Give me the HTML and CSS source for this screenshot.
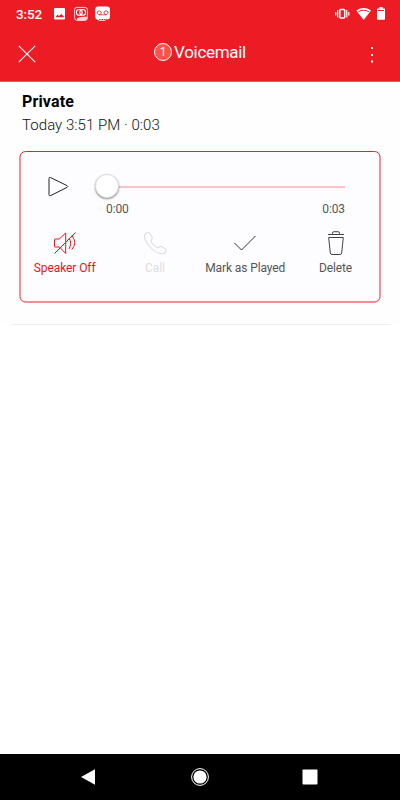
FILE: index.html
```html
<!DOCTYPE html>
<html lang="en">
<head>
<meta charset="utf-8">
<title>Voicemail</title>
<link rel="stylesheet" href="styles.css">
</head>
<body>
<header class="top">
  <div class="status">
    <span class="time">3:52</span>
    <svg class="notices" width="58" height="16" viewBox="0 0 58 16">
      <rect x="1" y="2" width="11" height="11.5" rx="1" fill="#fff"/>
      <path d="M2.500 11.200l2-2.700 1.500 1.600L8.400 8l3 3.200z" fill="#ed1c24"/>
      <rect x="21.600" y="1.400" width="12.800" height="13" rx="2.500" fill="none" stroke="#fff" stroke-opacity=".8" stroke-width="1"/>
      <path d="M24 12.200q3.500-1.700 10-1.400v1.800q-.5 1.600-2 1.600h-8z" fill="#ffd9db"/>
      <circle cx="26.300" cy="6.400" r="2.900" fill="none" stroke="#fff" stroke-width="1.100"/>
      <circle cx="29.700" cy="6.400" r="2.900" fill="none" stroke="#fff" stroke-width="1.100"/>
      <path d="M45 .5h9q3 0 3 3v7q0 3-3 3h-1l-1 1.300h-6l-1-.8q-2.800-.5-2.800-3.500v-7q0-3 2.800-3z" fill="#fff"/>
      <path d="M46.200 4.800a1.900 1.900 0 1 0 .1 0M53 4.800a1.900 1.900 0 1 0 .1 0M46.200 8.800h3.300M49.800 8.800h3" fill="none" stroke="#ed1c24" stroke-width=".9"/>
      <path d="M46 13.500h8" stroke="#ed1c24" stroke-width="1" stroke-dasharray="1.500 1"/>
    </svg>
    <svg class="signals" width="52" height="16" viewBox="0 0 52 16">
      <rect x="5.800" y="2.500" width="4.900" height="8.500" rx="1" fill="none" stroke="#fff" stroke-width="1.500"/>
      <path d="M3.700 3v7.500M12.800 3v7.500M1.700 5v3.500M14.800 5v3.500" stroke="#fff" stroke-width="1.200"/>
      <path d="M22.300 3.400Q29.700-1.200 37 3.400L29.700 13z" fill="#fff"/>
      <path d="M24.500 4.800q5.200-3.200 10.400 0" fill="none" stroke="#ed1c24" stroke-width="1"/>
      <path d="M43.600 1.500h1.700V0h3.400v1.500h1.700q.6 0 .6.600V12q0 .8-.8.800h-6.400q-.8 0-.8-.8V2.100q0-.6.600-.6z" fill="#fff"/>
      <path d="M44 3.500h6" stroke="#ed1c24" stroke-width="1"/>
    </svg>
  </div>
  <div class="bar">
    <svg class="close" width="18" height="18" viewBox="0 0 18 18"><path d="M.8.800l16.400 16.400M17.200.8L.8 17.200" stroke="#fff" stroke-width="1.100"/></svg>
    <h1 class="title"><span class="badge">1</span><span class="name">Voicemail</span></h1>
    <svg class="more" width="4" height="18" viewBox="0 0 4 18"><path d="M1 1h2v2H1zM1 8h2v2H1zM1 14.500h2v2H1z" fill="#fff"/></svg>
  </div>
</header>
<main class="message">
  <h2 class="caller">Private</h2>
  <p class="when">Today 3:51 PM · 0:03</p>
  <section class="player">
    <svg class="frame" width="362" height="153" viewBox="0 0 362 153"><rect x="1" y=".5" width="360" height="150.500" rx="5.500" fill="#fdfdff" stroke="#ee1c24" stroke-width="1"/></svg>
    <div class="track-row">
      <svg class="play" width="22" height="22" viewBox="0 0 22 22"><path d="M2 2.700q0-1.900 1.700-1.100L20 9.600q1.500.9 0 1.800L3.700 19.600q-1.700.7-1.700-1.100z" fill="none" stroke="#222" stroke-width="1"/></svg>
      <div class="slider"><span class="thumb"></span></div>
    </div>
    <div class="times"><span>0:00</span><span>0:03</span></div>
    <div class="actions">
      <div class="action speaker">
        <svg width="24" height="26" viewBox="0 0 24 26"><g fill="none" stroke="#e8141c" stroke-width="1"><path d="M2 9h4.200L12.700 3v20.500L6.500 17H2q-.5 0-.5-.5v-7q0-.5.500-.5zM1.500 23.500L22.500 2.500M16 8q3.300 5 0 11M18.800 5.500q6 7.500 0 14"/></g></svg>
        <span>Speaker Off</span>
      </div>
      <div class="action call">
        <svg width="24" height="26" viewBox="0 0 24 26"><path d="M2.500 3.500Q5 1.500 7 3.300L9 7q.8 1.400-.5 2.700-1.300 1 .1 2.800 2.200 3 5 4.900 1.500 1 2.500-.3 1-1.200 2.600-.5l3.500 2.300q1.500 1.200.2 3.200-1.200 1.700-3.300 1.700Q13 23.500 7 17 1.300 10.500 1.500 5.800q0-1.500 1-2.300z" fill="none" stroke="#ddd" stroke-width="1.100"/></svg>
        <span>Call</span>
      </div>
      <div class="action mark">
        <svg width="24" height="26" viewBox="0 0 24 26"><path d="M1.500 13l7 7L22.500 6" fill="none" stroke="#333" stroke-width="1"/></svg>
        <span>Mark as Played</span>
      </div>
      <div class="action delete">
        <svg width="24" height="26" viewBox="0 0 24 26"><path d="M4 4.500h16M8.500 4.500V3.200Q8.500 1.700 10 1.700h4q1.500 0 1.500 1.500v1.300M4.700 7.500h14.600L17.700 23q-.2 1.500-1.700 1.500H8q-1.500 0-1.700-1.500z" fill="none" stroke="#444" stroke-width="1"/></svg>
        <span>Delete</span>
      </div>
    </div>
  </section>
</main>
<nav class="nav">
  <svg width="16" height="18" viewBox="0 0 16 18"><path d="M1 9L15 1.200v15.600z" fill="#fff"/></svg>
  <svg class="home" width="20" height="20" viewBox="0 0 20 20"><circle cx="10" cy="10" r="8.400" fill="none" stroke="#fff" stroke-width="1"/><circle cx="10" cy="10" r="6.600" fill="#fff"/></svg>
  <svg width="16" height="16" viewBox="0 0 16 16"><rect x=".5" y=".5" width="15" height="15" rx=".8" fill="#fff"/></svg>
</nav>
</body>
</html>
```
FILE: styles.css
```css
* { box-sizing: border-box; margin: 0; padding: 0; }
body {
  width: 400px;
  height: 800px;
  display: flex;
  flex-direction: column;
  background: #fff;
  font-family: Roboto, sans-serif;
  color: #222;
  overflow: hidden;
}
svg { display: block; flex: none; }
.top {
  height: 82px;
  flex: none;
  background: #ed1c24;
  border-bottom: 1px solid #f8555a;
  color: #fff;
}
.status {
  height: 28px;
  display: flex;
  align-items: flex-start;
  padding: 6px 14px 0 16px;
}
.time { font-size: 13.500px; font-weight: 500; line-height: 17px; width: 37px; letter-spacing: -.1px; }
.signals { margin-left: auto; margin-top: 1px; }
.bar {
  height: 53px;
  display: flex;
  align-items: center;
  justify-content: space-between;
  padding: 0 26px 0 18px;
}
.close { margin-top: -1px; }
.title {
  display: flex;
  align-items: center;
  font-size: 17px;
  font-weight: 400;
  line-height: 20px;
  letter-spacing: -.3px;
  gap: 2px;
  margin: -5px 6px 0 0;
}
.badge {
  width: 18px;
  height: 18px;
  border: 1px solid #fff;
  border-radius: 50%;
  background: #ff5148;
  font-size: 12px;
  line-height: 16px;
  text-align: center;
}
.message {
  height: 243px;
  padding: 10px 19px 0;
  background: #fefefe;
  border-bottom: 1px solid #eee;
  border-image: linear-gradient(90deg, #fff 2.500%, #eee 3.500%, #eee 97%, #fff 98%) 1;
  border-width: 0 0 1px;
}
.caller { font-size: 16px; font-weight: 700; line-height: 20px; padding-left: 3px; color: #000; letter-spacing: .15px; }
.when { font-size: 15px; font-weight: 300; line-height: 20px; margin: 3px 0 16px; padding-left: 3px; color: #111; letter-spacing: .05px; }
.player { position: relative; width: 362px; height: 153px; padding-top: 22px; }
.frame { position: absolute; left: 0; top: 0; }
.track-row { position: relative; display: flex; align-items: center; height: 26px; padding-left: 28px; }
.play { margin-top: 1px; }
.slider { width: 238px; height: 2px; margin-left: 38px; margin-top: 1px; background: #fbc3c7; display: flex; align-items: center; }
.thumb { flex: none; width: 24px; height: 24px; margin: -1px 0 0 -12px; border-radius: 50%; background: #fff; border: 1px solid #ddd; box-shadow: 0 1px 2px rgba(0,0,0,.45); }
.times { position: relative; display: flex; justify-content: space-between; padding: 2px 36px 0 87px; font-size: 12px; line-height: 17px; color: #555; letter-spacing: -.1px; }
.actions { position: relative; display: flex; margin-top: 12px; padding-left: .5px; }
.action { width: 90.300px; display: flex; flex-direction: column; align-items: center; font-size: 12px; line-height: 17px; gap: 4px; color: #555; white-space: nowrap; letter-spacing: -.1px; }
.action.speaker { color: #e8141c; }
.action.call { color: #ddd; }
.nav {
  height: 46px;
  margin-top: auto;
  flex: none;
  background: #000;
  display: flex;
  align-items: center;
  justify-content: space-between;
  padding: 0 82px 0 80px;
}
.home { margin-left: 2px; }
```
